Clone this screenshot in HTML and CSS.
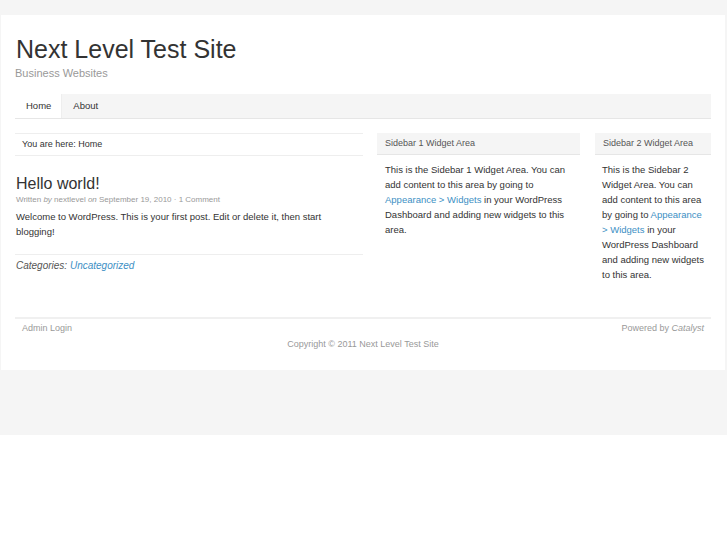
FILE: index.html
```html
<!DOCTYPE html>
<html>
<head>
<meta charset="utf-8">
<title>Next Level Test Site</title>
<link rel="stylesheet" href="styles.css">
</head>
<body>
<div class="wrap">
  <header class="header">
    <h1 class="site-title">Next Level Test Site</h1>
    <p class="tagline">Business Websites</p>
  </header>
  <nav class="nav">
    <a class="nav-item current" href="#">Home</a>
    <a class="nav-item" href="#">About</a>
  </nav>
  <div class="columns">
    <main class="main">
      <div class="breadcrumb">You are here: Home</div>
      <article class="post">
        <h2 class="post-title">Hello world!</h2>
        <div class="post-meta">Written <em>by</em> nextlevel <em>on</em> September 19, 2010 · 1 Comment</div>
        <p class="post-body">Welcome to WordPress. This is your first post. Edit or delete it, then start blogging!</p>
        <div class="post-info">Categories: <a href="#">Uncategorized</a></div>
      </article>
    </main>
    <aside class="sidebar s1">
      <h3 class="widget-title">Sidebar 1 Widget Area</h3>
      <p class="widget-text">This is the Sidebar 1 Widget Area. You can add content to this area by going to <a href="#">Appearance &gt; Widgets</a> in your WordPress Dashboard and adding new widgets to this area.</p>
    </aside>
    <aside class="sidebar s2">
      <h3 class="widget-title">Sidebar 2 Widget Area</h3>
      <p class="widget-text">This is the Sidebar 2 Widget Area. You can add content to this area by going to <a href="#">Appearance &gt; Widgets</a> in your WordPress Dashboard and adding new widgets to this area.</p>
    </aside>
  </div>
  <footer class="footer">
    <div class="footer-row">
      <span>Admin Login</span>
      <span>Powered by <em>Catalyst</em></span>
    </div>
    <div class="copyright">Copyright © 2011 Next Level Test Site</div>
  </footer>
</div>
</body>
</html>
```
FILE: styles.css
```css
html { background: #fff; }
body {
  margin: 0;
  padding: 15px 2px 65px 1px;
  background: #f5f5f5;
  font-family: "Liberation Sans", Arial, sans-serif;
  color: #333;
}
a { color: #3d8fc4; text-decoration: none; }
.wrap {
  background: #fff;
  padding: 19px 14px 18px 14px;
}
.site-title {
  margin: 0;
  font-size: 25px;
  font-weight: normal;
  line-height: 30px;
  color: #333;
  padding-left: 1px;
}
.tagline {
  margin: 2px 0 0 0;
  font-size: 11px;
  line-height: 14px;
  color: #999;
}
.nav {
  margin-top: 14px;
  display: flex;
  background: #f5f5f5;
  border-bottom: 1px solid #e6e6e6;
  height: 24px;
}
.nav-item {
  display: block;
  padding: 0 11px 0 11px;
  font-size: 9.5px;
  line-height: 24px;
  color: #333;
}
.nav-item.current {
  background: #fff;
  border-right: 1px solid #eee;
  padding-right: 10px;
}
.columns {
  display: flex;
  margin-top: 14px;
}
.main { width: 348px; }
.s1 { width: 203px; margin-left: 14px; }
.s2 { width: 116px; margin-left: 15px; }
.breadcrumb {
  border-top: 1px solid #eee;
  border-bottom: 1px solid #eee;
  padding: 0 7px;
  font-size: 9px;
  line-height: 21px;
}
.post { padding: 0 1px; }
.post-title {
  margin: 18px 0 0 0;
  font-size: 16px;
  font-weight: normal;
  line-height: 20px;
}
.post-meta {
  font-size: 8px;
  line-height: 11px;
  color: #999;
}
.post-body {
  margin: 4px 0 0 0;
  font-size: 9.5px;
  line-height: 15px;
}
.post-info {
  margin: 15px -1px 0 -1px;
  border-top: 1px solid #eee;
  padding: 3px 1px 0;
  font-size: 10px;
  line-height: 15px;
  font-style: italic;
  color: #555;
}
.widget-title {
  margin: 0;
  background: #f5f5f5;
  border-bottom: 1px solid #e6e6e6;
  padding: 0 8px;
  font-size: 9px;
  font-weight: normal;
  line-height: 21px;
  color: #555;
}
.widget-text {
  margin: 7px 0 0 0;
  padding: 0 3px 0 7px;
  font-size: 9.5px;
  line-height: 15px;
}
.s1 .widget-text { padding-left: 8px; }
.footer {
  margin-top: 35px;
  border-top: 2px solid #f0f0f0;
  font-size: 9px;
  color: #999;
}
.footer-row {
  display: flex;
  justify-content: space-between;
  padding: 2px 7px 0;
  line-height: 15px;
}
.copyright {
  text-align: center;
  line-height: 16px;
}
```
